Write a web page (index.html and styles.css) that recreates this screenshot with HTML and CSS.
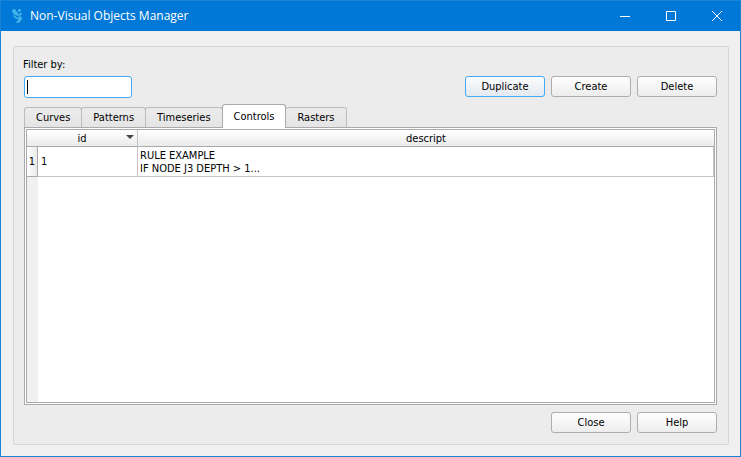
FILE: index.html
```html
<!DOCTYPE html>
<html lang="en">
<head>
<meta charset="utf-8">
<title>Non-Visual Objects Manager</title>
<link rel="stylesheet" href="styles.css">
</head>
<body>
<div class="window">
  <header class="titlebar">
    <svg class="logo" width="12" height="16" viewBox="0 0 12 16" aria-hidden="true">
      <path d="M1 3Q1 1 3 1Q5 1 5 3L7 5V8Q4 8 2 5Q1 4 1 3Z M8 1Q10 1 10 2Q10 4 8 4Q6 3 8 1Z M9 5Q11 4 11 6Q10 8 7 8Q7 6 9 5Z M2 7Q4 7 5 9Q7 9 7 11Q6 12 4 10Q2 9 2 7Z M7 9Q10 7 11 10Q11 13 7 15Q5 15 5 14Q8 13 7 9Z"/>
    </svg>
    <h1 class="title">Non-Visual Objects Manager</h1>
    <div class="window-buttons">
      <button class="window-button" type="button" aria-label="Minimize"><svg width="12" height="12" viewBox="0 0 12 12"><path d="M1 6.500H11"/></svg></button>
      <button class="window-button" type="button" aria-label="Maximize"><svg width="12" height="12" viewBox="0 0 12 12"><path d="M1.500 1.500H10.500V10.500H1.500Z"/></svg></button>
      <button class="window-button" type="button" aria-label="Close window"><svg width="12" height="12" viewBox="0 0 12 12"><path d="M1 1L11 11M11 1L1 11"/></svg></button>
    </div>
  </header>
  <main class="content">
    <div class="group">
      <label class="filter-label" for="filter">Filter by:</label>
      <div class="toolbar">
        <input class="filter" id="filter" type="text">
        <div class="actions">
          <button class="button button-default" type="button">Duplicate</button>
          <button class="button" type="button">Create</button>
          <button class="button" type="button">Delete</button>
        </div>
      </div>
      <div class="tabs" role="tablist">
        <button class="tab" role="tab" type="button">Curves</button>
        <button class="tab" role="tab" type="button">Patterns</button>
        <button class="tab" role="tab" type="button">Timeseries</button>
        <button class="tab tab-selected" role="tab" type="button" aria-selected="true">Controls</button>
        <button class="tab" role="tab" type="button">Rasters</button>
      </div>
      <div class="pane" role="tabpanel">
        <div class="view">
          <table class="table">
            <colgroup><col class="col-number"><col class="col-id"><col></colgroup>
            <thead>
              <tr>
                <th class="head head-id" colspan="2">id<svg class="sort" width="8" height="4" viewBox="0 0 8 4" aria-hidden="true"><path d="M0 0H8L4 4Z"/></svg></th>
                <th class="head">descript</th>
              </tr>
            </thead>
            <tbody>
              <tr>
                <th class="row-number" scope="row">1</th>
                <td class="cell cell-id">1</td>
                <td class="cell">RULE EXAMPLE<br>IF NODE J3 DEPTH &gt; 1...</td>
              </tr>
            </tbody>
          </table>
          <div class="gutter"></div>
        </div>
      </div>
      <div class="footer">
        <button class="button" type="button">Close</button>
        <button class="button" type="button">Help</button>
      </div>
    </div>
  </main>
</div>
</body>
</html>
```
FILE: styles.css
```css
* { box-sizing: border-box; }

body {
  margin: 0;
  font: 11px/13px Tahoma, "DejaVu Sans Condensed", "DejaVu Sans", sans-serif;
  color: #000;
}

button, input { font: inherit; color: inherit; }

.window {
  display: flex;
  flex-direction: column;
  min-height: 100vh;
  border: 1px solid #1883d7;
  background: #f0f0f0;
}

.titlebar {
  display: flex;
  align-items: center;
  height: 30px;
  padding-left: 10px;
  background: #0078d7;
  color: #fff;
}

.logo { fill: #42b4e6; }

.title {
  flex: 1;
  margin: 0 0 0 7px;
  font: 12px/16px "Segoe UI", "Open Sans", sans-serif;
}

.window-buttons { display: flex; }

.window-button {
  display: flex;
  align-items: center;
  justify-content: center;
  width: 46px;
  height: 30px;
  padding: 0;
  border: 0;
  background: none;
}

.window-button path { fill: none; stroke: #fff; }

.content {
  flex: 1;
  display: flex;
  padding: 15px 11px 11px 12px;
}

.group {
  flex: 1;
  display: flex;
  flex-direction: column;
  min-width: 0;
  padding: 10px 11px 11px 10px;
  border: 1px solid #d5d5d5;
  border-radius: 2px;
  background: #ececec;
}

.filter-label { margin: 1px 0 5px -1px; }

.toolbar {
  display: flex;
  justify-content: space-between;
}

.filter {
  width: 108px;
  height: 22px;
  padding: 0 3px;
  border: 1px solid #45a9f5;
  border-radius: 3px;
  outline: 0;
  background: linear-gradient(#000, #000) 2px 3px / 1px 14px no-repeat #fff;
}

.actions, .footer {
  display: flex;
  gap: 6px;
}

.button {
  width: 80px;
  height: 21px;
  padding: 0;
  border: 1px solid #adadad;
  border-radius: 3px;
  background: linear-gradient(#fefefe, #ededed);
}

.button-default {
  border-color: #45a9f5;
  background: linear-gradient(#fdfdfe, #e3e9ef);
}

.tabs {
  display: flex;
  align-items: flex-end;
  height: 23px;
  margin-top: 6px;
}

.tab {
  height: 20px;
  margin-right: -1px;
  padding: 0 11px;
  border: 1px solid #bcbcbc;
  border-bottom: 0;
  border-radius: 3px 3px 0 0;
  background: linear-gradient(#ebebeb, #e5e5e5);
}

.tab-selected {
  z-index: 1;
  position: relative;
  height: 24px;
  margin-bottom: -1px;
  border-color: #aaa;
  background: #fff;
}

.pane {
  flex: 1;
  display: flex;
  padding: 1px;
  border: 1px solid #aaa;
  background: #fff;
}

.view {
  flex: 1;
  display: flex;
  flex-direction: column;
  min-width: 0;
  border: 1px solid #aaa;
}

.table {
  width: 100%;
  table-layout: fixed;
  border-collapse: separate;
  border-spacing: 0;
}

.col-number { width: 11px; }
.col-id { width: 100px; }

.head {
  height: 17px;
  padding: 0;
  border-bottom: 1px solid #aaa;
  background: linear-gradient(#fff, #ebebeb);
  font-weight: normal;
}

.head-id {
  position: relative;
  border-right: 1px solid #c4c4c4;
}

.sort {
  position: absolute;
  top: 5px;
  right: 3px;
  fill: #444;
}

.row-number {
  height: 30px;
  padding: 0;
  border-right: 1px solid #aaa;
  border-bottom: 1px solid #aaa;
  background: linear-gradient(90deg, #fff, #ebebeb);
  font-weight: normal;
}

.cell {
  padding: 0 2px;
  border-right: 1px solid #c4c4c4;
  border-bottom: 1px solid #c4c4c4;
}

.cell-id { padding-left: 3px; }

.gutter {
  flex: 1;
  width: 11px;
  background: #f0f0f0;
}

.footer {
  justify-content: flex-end;
  margin-top: 7px;
}
```
